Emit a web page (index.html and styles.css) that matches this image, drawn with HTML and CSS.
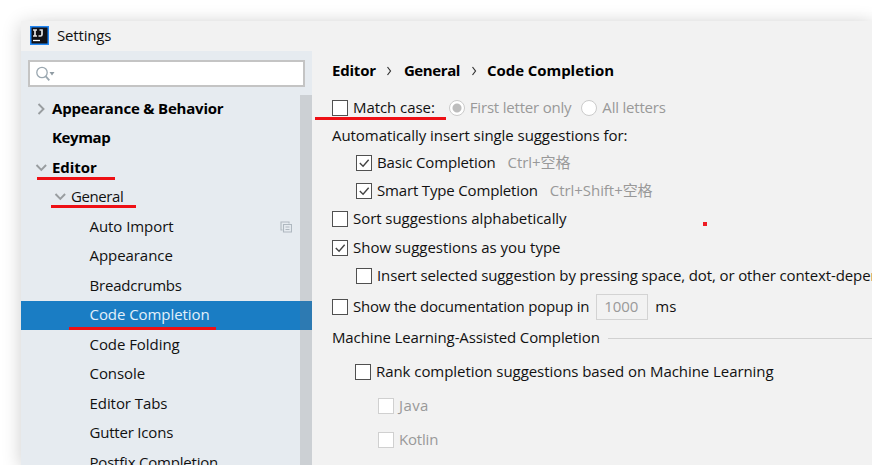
FILE: index.html
```html
<!DOCTYPE html>
<html lang="en">
<head>
<meta charset="utf-8">
<title>Settings</title>
<link rel="stylesheet" href="styles.css">
</head>
<body>
<div class="window">
  <header class="titlebar">
    <svg class="logo" width="19" height="19" viewBox="0 0 19 19"><rect width="19" height="19" fill="#2187f5"/><rect x="1.500" y="1.500" width="16" height="16" fill="#111116"/><path d="M3 4h4M5 4v6M3 10h4M12 3.200v5.300q0 1.500-1.500 1.500H8.500M9.500 4H12" fill="none" stroke="#e4e4e4" stroke-width="1.700"/><path d="M3 14.500h7" stroke="#fff" stroke-width="1.300"/></svg>
    <span class="t15">Settings</span>
  </header>
  <div class="content">
    <nav class="sidebar">
      <div class="search">
        <svg width="20" height="16" viewBox="0 0 20 16"><circle cx="6" cy="6.500" r="5.200" fill="none" stroke="#9aa7b0" stroke-width="1.300"/><path d="M9.800 10.300l3.500 4" stroke="#9aa7b0" stroke-width="1.800"/><path d="M13.500 6h5l-2.500 3.500z" fill="#8f9ba3"/></svg>
      </div>
      <div class="scrollbar"></div>
      <ul class="tree">
        <li class="row top"><svg class="arrow" width="12" height="12" viewBox="0 0 12 12"><path d="M3.500 1l5 5-5 5"/></svg><span class="t20">Appearance &amp; Behavior</span></li>
        <li class="row top"><i class="arrow"></i><span class="t40">Keymap</span></li>
        <li class="row top"><svg class="arrow" width="12" height="12" viewBox="0 0 12 12"><path d="M1.500 3l4.800 5 4.800-5"/></svg><span class="mark mark-editor">Editor</span></li>
        <li class="row sub"><svg class="arrow" width="12" height="12" viewBox="0 0 12 12"><path d="M1.500 3l4.800 5 4.800-5"/></svg><span class="t40 mark mark-general">General</span></li>
        <li class="row leaf"><span>Auto Import</span><svg class="copy" width="12" height="12" viewBox="0 0 12 12"><path d="M2.500 9H1V1h8v1.500M3.500 3.500h8v7.500h-8zM5.500 6h4M5.500 8.500h4"/></svg></li>
        <li class="row leaf"><span>Appearance</span></li>
        <li class="row leaf"><span class="t20">Breadcrumbs</span></li>
        <li class="row leaf selected"><span class="mark mark-completion">Code Completion</span></li>
        <li class="row leaf"><span>Code Folding</span></li>
        <li class="row leaf"><span>Console</span></li>
        <li class="row leaf"><span>Editor Tabs</span></li>
        <li class="row leaf"><span class="t20">Gutter Icons</span></li>
        <li class="row leaf"><span class="t20">Postfix Completion</span></li>
      </ul>
    </nav>
    <main class="panel">
      <h1 class="line crumbs"><span class="t20">Editor</span><svg width="6" height="10" viewBox="0 0 6 10"><path d="M1.500 1l3 4-3 4"/></svg><span class="t40">General</span><svg width="6" height="10" viewBox="0 0 6 10"><path d="M1.500 1l3 4-3 4"/></svg><span>Code Completion</span></h1>
      <div class="line match">
        <div class="item mark mark-match"><i class="box"></i><span>Match case:</span></div>
        <div class="item muted radio-first"><i class="radio on"></i><span class="t20">First letter only</span></div>
        <div class="item muted radio-all"><i class="radio"></i><span class="t20">All letters</span></div>
      </div>
      <div class="line auto"><span>Automatically insert single suggestions for:</span></div>
      <div class="line in basic"><i class="box"><svg viewBox="0 0 15 15"><path d="M3 7.500l3.500 3.500 6-7"/></svg></i><span class="t15">Basic Completion</span><span class="hint">Ctrl+空格</span></div>
      <div class="line in smart"><i class="box"><svg viewBox="0 0 15 15"><path d="M3 7.500l3.500 3.500 6-7"/></svg></i><span class="t15">Smart Type Completion</span><span class="hint">Ctrl+Shift+空格</span></div>
      <div class="line sort"><i class="box"></i><span>Sort suggestions alphabetically</span><i class="dot"></i></div>
      <div class="line show"><i class="box"><svg viewBox="0 0 15 15"><path d="M3 7.500l3.500 3.500 6-7"/></svg></i><span class="t0">Show suggestions as you type</span></div>
      <div class="line in insert"><i class="box"></i><span class="t10">Insert selected suggestion by pressing space, dot, or other context-dependent keys</span></div>
      <div class="line doc"><i class="box"></i><span class="t20">Show the documentation popup in</span><div class="field"><span>1000</span></div><span>ms</span></div>
      <div class="line ml"><span class="t10">Machine Learning-Assisted Completion</span><i class="rule"></i></div>
      <div class="line in rank"><i class="box"></i><span>Rank completion suggestions based on Machine Learning</span></div>
      <div class="line lang muted java"><i class="box off"></i><span class="wide">Java</span></div>
      <div class="line lang muted kotlin"><i class="box off"></i><span class="t20">Kotlin</span></div>
    </main>
  </div>
</div>
</body>
</html>
```
FILE: styles.css
```css
* { box-sizing: border-box; }
body {
  margin: 0;
  width: 872px;
  height: 465px;
  overflow: hidden;
  padding: 21px 0 0 21px;
  background: #fff;
  color: #111;
  font: 15px/20px "Open Sans", "Noto Sans CJK SC", sans-serif;
  letter-spacing: -.06px;
  white-space: nowrap;
}
.window {
  width: 851px;
  height: 444px;
  background: #f2f2f2;
  box-shadow: 0 3px 18px rgba(0, 0, 0, .2), 20px 3px 18px rgba(0, 0, 0, .04);
}
.t0 { letter-spacing: -.02px; }
.t10 { letter-spacing: -.12px; }
.t15 { letter-spacing: -.16px; }
.t20 { letter-spacing: -.2px; }
.t40 { letter-spacing: -.4px; }
.wide { letter-spacing: .4px; }

.titlebar {
  display: flex;
  align-items: center;
  gap: 8px;
  height: 30px;
  padding: 0 0 2px 9px;
}
.titlebar span { padding-bottom: 1px; }
.content { display: flex; height: 414px; overflow: hidden; }

.sidebar {
  position: relative;
  flex: none;
  width: 291px;
  padding-top: 9px;
  background: #e6ebf0;
}
.search {
  display: flex;
  align-items: center;
  width: 277px;
  height: 27px;
  margin-left: 7px;
  padding-left: 6px;
  border: 2px solid #c4c4c4;
  background: #fff;
}
.scrollbar {
  position: absolute;
  z-index: 1;
  top: 44px;
  right: 0;
  bottom: 0;
  width: 12px;
  background: rgba(115, 115, 115, .22);
}
.tree { margin: 7px 0 0; padding: 0; list-style: none; }
.row { display: flex; align-items: center; height: 29.5px; }
.row span, .line span { padding-bottom: 2px; }
.arrow { flex: none; width: 12px; height: 12px; margin-right: 5px; }
.arrow path { fill: none; stroke: #999da0; stroke-width: 1.9; }
.top { padding-left: 14px; font-weight: 700; color: #000; }
.sub { padding-left: 33px; }
.leaf { padding-left: 68.5px; }
.selected { background: #1a7dc4; color: #e3f0fa; }
.copy { margin-left: auto; margin-right: 20px; }
.copy path { fill: none; stroke: #afb8c0; stroke-width: 1.1; }

.mark { position: relative; }
.mark::after {
  content: "";
  position: absolute;
  height: 3px;
  background: #ee1015;
}
.mark-editor::after { left: -15px; top: 20px; width: 78px; }
.mark-general::after { left: -20px; top: 19px; width: 85px; }
.mark-completion::after { left: -21px; top: 23px; width: 147px; }
.mark-match::after { left: -17px; top: 20px; width: 131px; }

.panel { flex: 1; min-width: 0; padding-left: 20px; }
.line { display: flex; align-items: center; margin: 0; }
.in { padding-left: 24px; }
.lang { padding-left: 46px; }
.muted, .hint { color: #999; }
.hint { margin-left: 12px; }
.item { display: flex; align-items: center; }
.box {
  flex: none;
  width: 16px;
  height: 16px;
  margin: 0 5px 0 0;
  border: 1.5px solid #505050;
  background: #fff;
}
.box svg { display: block; width: 14px; height: 14px; }
.box path { fill: none; stroke: #444; stroke-width: 1.5; }
.off { border-color: #d0d0d0; }
.radio {
  width: 16px;
  height: 16px;
  margin-right: 5px;
  border: 1px solid #cbcbcb;
  border-radius: 50%;
  background: #fff;
}
.radio.on { background: radial-gradient(circle, #bdbdbd 4px, #fff 5px); }
.radio-first { margin-left: 14px; }
.radio-all { margin-left: 10px; }

.crumbs { height: 39px; font-size: 15px; color: #000; }
.crumbs svg { flex: none; margin: 0 12px 0 10px; }
.crumbs svg ~ svg { margin: 0 10px 0 11px; }
.crumbs path { fill: none; stroke: #333; stroke-width: 1.2; }
.match { height: 36px; }
.auto { height: 19px; }
.basic { height: 35px; }
.smart { height: 22px; }
.sort { height: 34px; }
.show { height: 23px; }
.insert { height: 34px; }
.doc { height: 28px; }
.ml { height: 34px; }
.rank { height: 33px; padding-left: 23px; }
.java { height: 35px; }
.kotlin { height: 34px; }
.dot { width: 4px; height: 4px; margin: 10px 0 0 136px; background: #ee1c24; }
.field {
  display: flex;
  align-items: center;
  width: 52px;
  height: 26px;
  margin: 0 7px;
  padding-left: 7px;
  border: 1.5px solid #d3d3d3;
  color: #999;
}
.rule { flex: 1; height: 1px; margin-left: 8px; background: #d1d1d1; }
```
